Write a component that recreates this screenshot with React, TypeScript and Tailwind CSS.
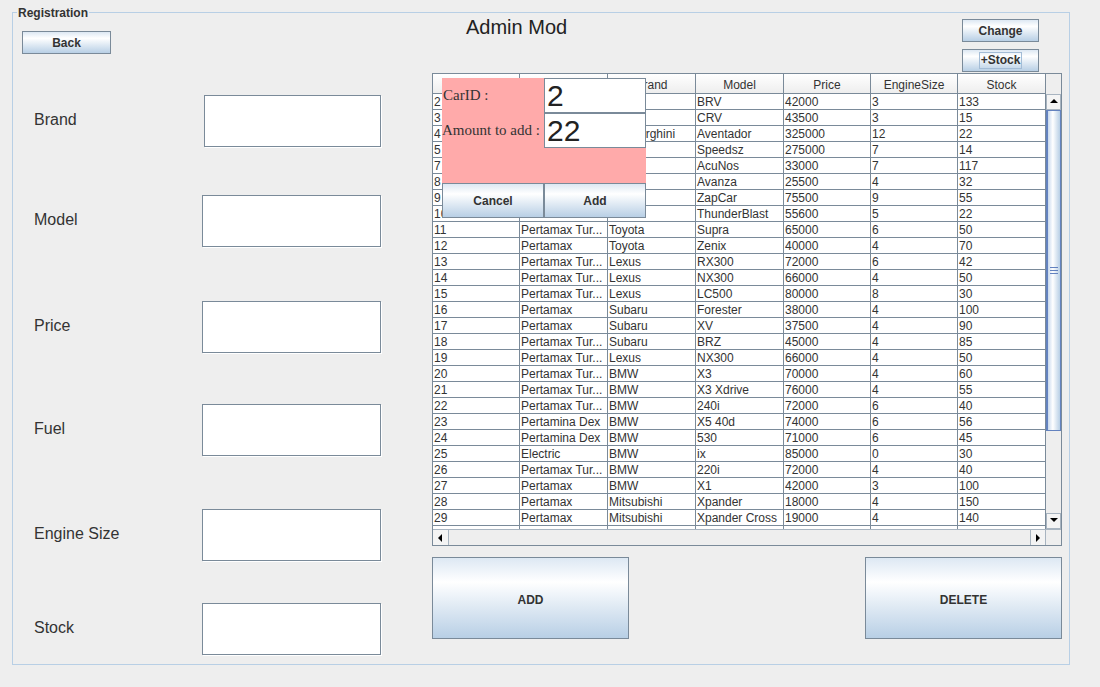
import React from "react";

const sans = "font-['Liberation_Sans',Arial,sans-serif]";
const btn =
  "flex items-center justify-center border border-[#7a8a99] bg-linear-to-b from-[#dde8f3] via-white via-30% to-[#b8cfe5] text-[12px] font-bold text-[#333333]";

// header names of the first two columns sit under the popup, so they stay blank
const cols = [
  { name: "", w: "w-[87px]" },
  { name: "", w: "w-[88px]" },
  { name: "Brand", w: "w-[88px]" },
  { name: "Model", w: "w-[88px]" },
  { name: "Price", w: "w-[87px]" },
  { name: "EngineSize", w: "w-[87px]" },
  { name: "Stock", w: "w-[88px]" },
];

const rows: string[][] = [
  ["2", "", "", "BRV", "42000", "3", "133"],
  ["3", "", "", "CRV", "43500", "3", "15"],
  ["4", "", "Lamborghini", "Aventador", "325000", "12", "22"],
  ["5", "", "", "Speedsz", "275000", "7", "14"],
  ["7", "", "", "AcuNos", "33000", "7", "117"],
  ["8", "", "", "Avanza", "25500", "4", "32"],
  ["9", "", "", "ZapCar", "75500", "9", "55"],
  ["10", "", "", "ThunderBlast", "55600", "5", "22"],
  ["11", "Pertamax Tur...", "Toyota", "Supra", "65000", "6", "50"],
  ["12", "Pertamax", "Toyota", "Zenix", "40000", "4", "70"],
  ["13", "Pertamax Tur...", "Lexus", "RX300", "72000", "6", "42"],
  ["14", "Pertamax Tur...", "Lexus", "NX300", "66000", "4", "50"],
  ["15", "Pertamax Tur...", "Lexus", "LC500", "80000", "8", "30"],
  ["16", "Pertamax", "Subaru", "Forester", "38000", "4", "100"],
  ["17", "Pertamax", "Subaru", "XV", "37500", "4", "90"],
  ["18", "Pertamax Tur...", "Subaru", "BRZ", "45000", "4", "85"],
  ["19", "Pertamax Tur...", "Lexus", "NX300", "66000", "4", "50"],
  ["20", "Pertamax Tur...", "BMW", "X3", "70000", "4", "60"],
  ["21", "Pertamax Tur...", "BMW", "X3 Xdrive", "76000", "4", "55"],
  ["22", "Pertamax Tur...", "BMW", "240i", "72000", "6", "40"],
  ["23", "Pertamina Dex", "BMW", "X5 40d", "74000", "6", "56"],
  ["24", "Pertamina Dex", "BMW", "530", "71000", "6", "45"],
  ["25", "Electric", "BMW", "ix", "85000", "0", "30"],
  ["26", "Pertamax Tur...", "BMW", "220i", "72000", "4", "40"],
  ["27", "Pertamax", "BMW", "X1", "42000", "3", "100"],
  ["28", "Pertamax", "Mitsubishi", "Xpander", "18000", "4", "150"],
  ["29", "Pertamax", "Mitsubishi", "Xpander Cross", "19000", "4", "140"],
  ["", "", "", "", "", "", ""],
];

const fields = [
  { label: "Brand", mt: "mt-[41px]", fw: "ml-[2px] w-[177px]" },
  { label: "Model", mt: "mt-[48px]", fw: "w-[179px]" },
  { label: "Price", mt: "mt-[54px]", fw: "w-[179px]" },
  { label: "Fuel", mt: "mt-[51px]", fw: "w-[179px]" },
  { label: "Engine Size", mt: "mt-[53px]", fw: "w-[179px]" },
  { label: "Stock", mt: "mt-[42px]", fw: "w-[179px]" },
];

const Arrow = ({ dir }: { dir: "up" | "down" | "left" | "right" }) => {
  const pts = {
    up: "1,6 5,2 9,6",
    down: "1,2 5,6 9,2",
    left: "6,1 2,5 6,9",
    right: "3,1 7,5 3,9",
  }[dir];
  return (
    <svg width="10" height="10" viewBox="0 0 10 10">
      <polygon points={pts} fill="#000" />
    </svg>
  );
};

const App = () => {
  return (
    <div className={`w-[1100px] h-[687px] bg-[#eeeeee] pt-[12px] pl-[12px] ${sans} text-[#333333]`}>
      <div className="relative w-[1058px] h-[653px] border border-[#b8cfe5] flex">
        <span className="absolute left-[4px] -top-[7px] px-[1px] bg-[#eeeeee] text-[12px] leading-[14px] font-bold text-[#333333]">
          Registration
        </span>

        {/* left form */}
        <div className="w-[419px] flex flex-col">
          <button className={`${btn} ml-[9px] mt-[18px] w-[89px] h-[23px]`}>Back</button>
          {fields.map((f) => (
            <div key={f.label} className={`flex items-center pl-[21px] ${f.mt}`}>
              <span className="w-[168px] mb-[2px] text-[16px] text-[#333333]">{f.label}</span>
              <div className={`${f.fw} h-[52px] bg-white border border-[#7a8a99] shadow-[1px_1px_0_white]`} />
            </div>
          ))}
        </div>

        {/* right side */}
        <div className="relative w-[630px] flex flex-col">
          <div className="flex h-[60px]">
            <div className="ml-[34px] mt-[2px] text-[20px] leading-[24px] text-[#222222]">Admin Mod</div>
            <div className="ml-auto mr-[23px] mt-[6px] flex flex-col gap-[7px]">
              <button className={`${btn} w-[77px] h-[23px]`}>Change</button>
              <button className={`${btn} w-[77px] h-[23px]`}>
                <span className="border border-[#a3bcd6] px-[1px] leading-[15px]">+Stock</span>
              </button>
            </div>
          </div>

          {/* table scroll pane */}
          <div className="w-[630px] h-[473px] border border-[#7a8a99] flex flex-col bg-[#eeeeee]">
            <div className="flex h-[20px]">
              {cols.map((c, i) => (
                <div
                  key={i}
                  className={`${c.w} h-[20px] border-r border-b border-[#7a8a99] bg-linear-to-b from-white to-[#eeeeee] text-[12px] leading-[22px] text-center text-[#333333] overflow-hidden`}
                >
                  {c.name}
                </div>
              ))}
              <div className="w-[15px] h-[20px] bg-[#eeeeee]" />
            </div>
            <div className="flex h-[435px]">
              <div className="w-[613px] h-[435px] overflow-hidden bg-white">
                {rows.map((r, i) => (
                  <div key={i} className="flex h-[16px]">
                    {r.map((v, j) => (
                      <div
                        key={j}
                        className={`${cols[j].w} h-[16px] border-r border-b border-[#7a8a99] pl-[1px] text-[12px] leading-[17px] text-[#333333] whitespace-nowrap overflow-hidden`}
                      >
                        {v}
                      </div>
                    ))}
                  </div>
                ))}
              </div>
              <div className="w-[15px] h-[435px] flex flex-col bg-[#eeeeee]">
                <div className="h-[16px] flex items-center justify-center border border-[#a8b4c0] bg-[#f4f4f4]">
                  <Arrow dir="up" />
                </div>
                <div className="flex-1 flex flex-col">
                  <div className="h-[321px] border border-[#6382bf] border-l-2 bg-linear-to-r from-[#c8d9ee] via-white via-40% to-[#b8cfe5] flex flex-col items-center justify-center gap-[2px]">
                    <div className="w-[8px] h-px bg-[#6382bf]" />
                    <div className="w-[8px] h-px bg-[#6382bf]" />
                    <div className="w-[8px] h-px bg-[#6382bf]" />
                  </div>
                </div>
                <div className="h-[16px] flex items-center justify-center border border-[#a8b4c0] bg-[#f4f4f4]">
                  <Arrow dir="down" />
                </div>
              </div>
            </div>
            <div className="flex h-[16px] border-t border-[#a8b4c0]">
              <div className="w-[613px] flex">
                <div className="w-[16px] flex items-center justify-center border-r border-[#a8b4c0] bg-[#f4f4f4]">
                  <Arrow dir="left" />
                </div>
                <div className="flex-1 bg-[#eeeeee]" />
                <div className="w-[16px] flex items-center justify-center border-l border-r border-[#a8b4c0] bg-[#f4f4f4]">
                  <Arrow dir="right" />
                </div>
              </div>
              <div className="w-[15px] bg-[#eeeeee]" />
            </div>
          </div>

          <div className="flex justify-between mt-[11px]">
            <button className={`${btn} w-[197px] h-[82px] pt-[3px]`}>ADD</button>
            <button className={`${btn} w-[197px] h-[82px] pt-[3px]`}>DELETE</button>
          </div>

          {/* add stock popup */}
          <div className="absolute left-[10px] top-[65px] w-[204px] flex flex-col">
            <div className="h-[105px] bg-[#ffaaaa] flex flex-col">
              <div className="flex h-[35px] items-center">
                <span className="w-[102px] pl-[1px] text-[15px] font-['Liberation_Serif',serif] text-[#333333]">CarID :</span>
                <div className="w-[102px] h-[35px] bg-white border border-[#7a8a99] pl-[2px] text-[30px] leading-[33px] text-[#222222]">2</div>
              </div>
              <div className="flex h-[35px] items-center">
                <span className="w-[102px] text-[15px] font-['Liberation_Serif',serif] text-[#333333] whitespace-nowrap">Amount to add :</span>
                <div className="w-[102px] h-[35px] bg-white border border-[#7a8a99] pl-[2px] text-[30px] leading-[33px] text-[#222222]">22</div>
              </div>
            </div>
            <div className="flex h-[35px]">
              <button className={`${btn} w-[102px] h-[35px]`}>Cancel</button>
              <button className={`${btn} w-[102px] h-[35px]`}>Add</button>
            </div>
          </div>
        </div>
      </div>
    </div>
  );
};

export default App;
